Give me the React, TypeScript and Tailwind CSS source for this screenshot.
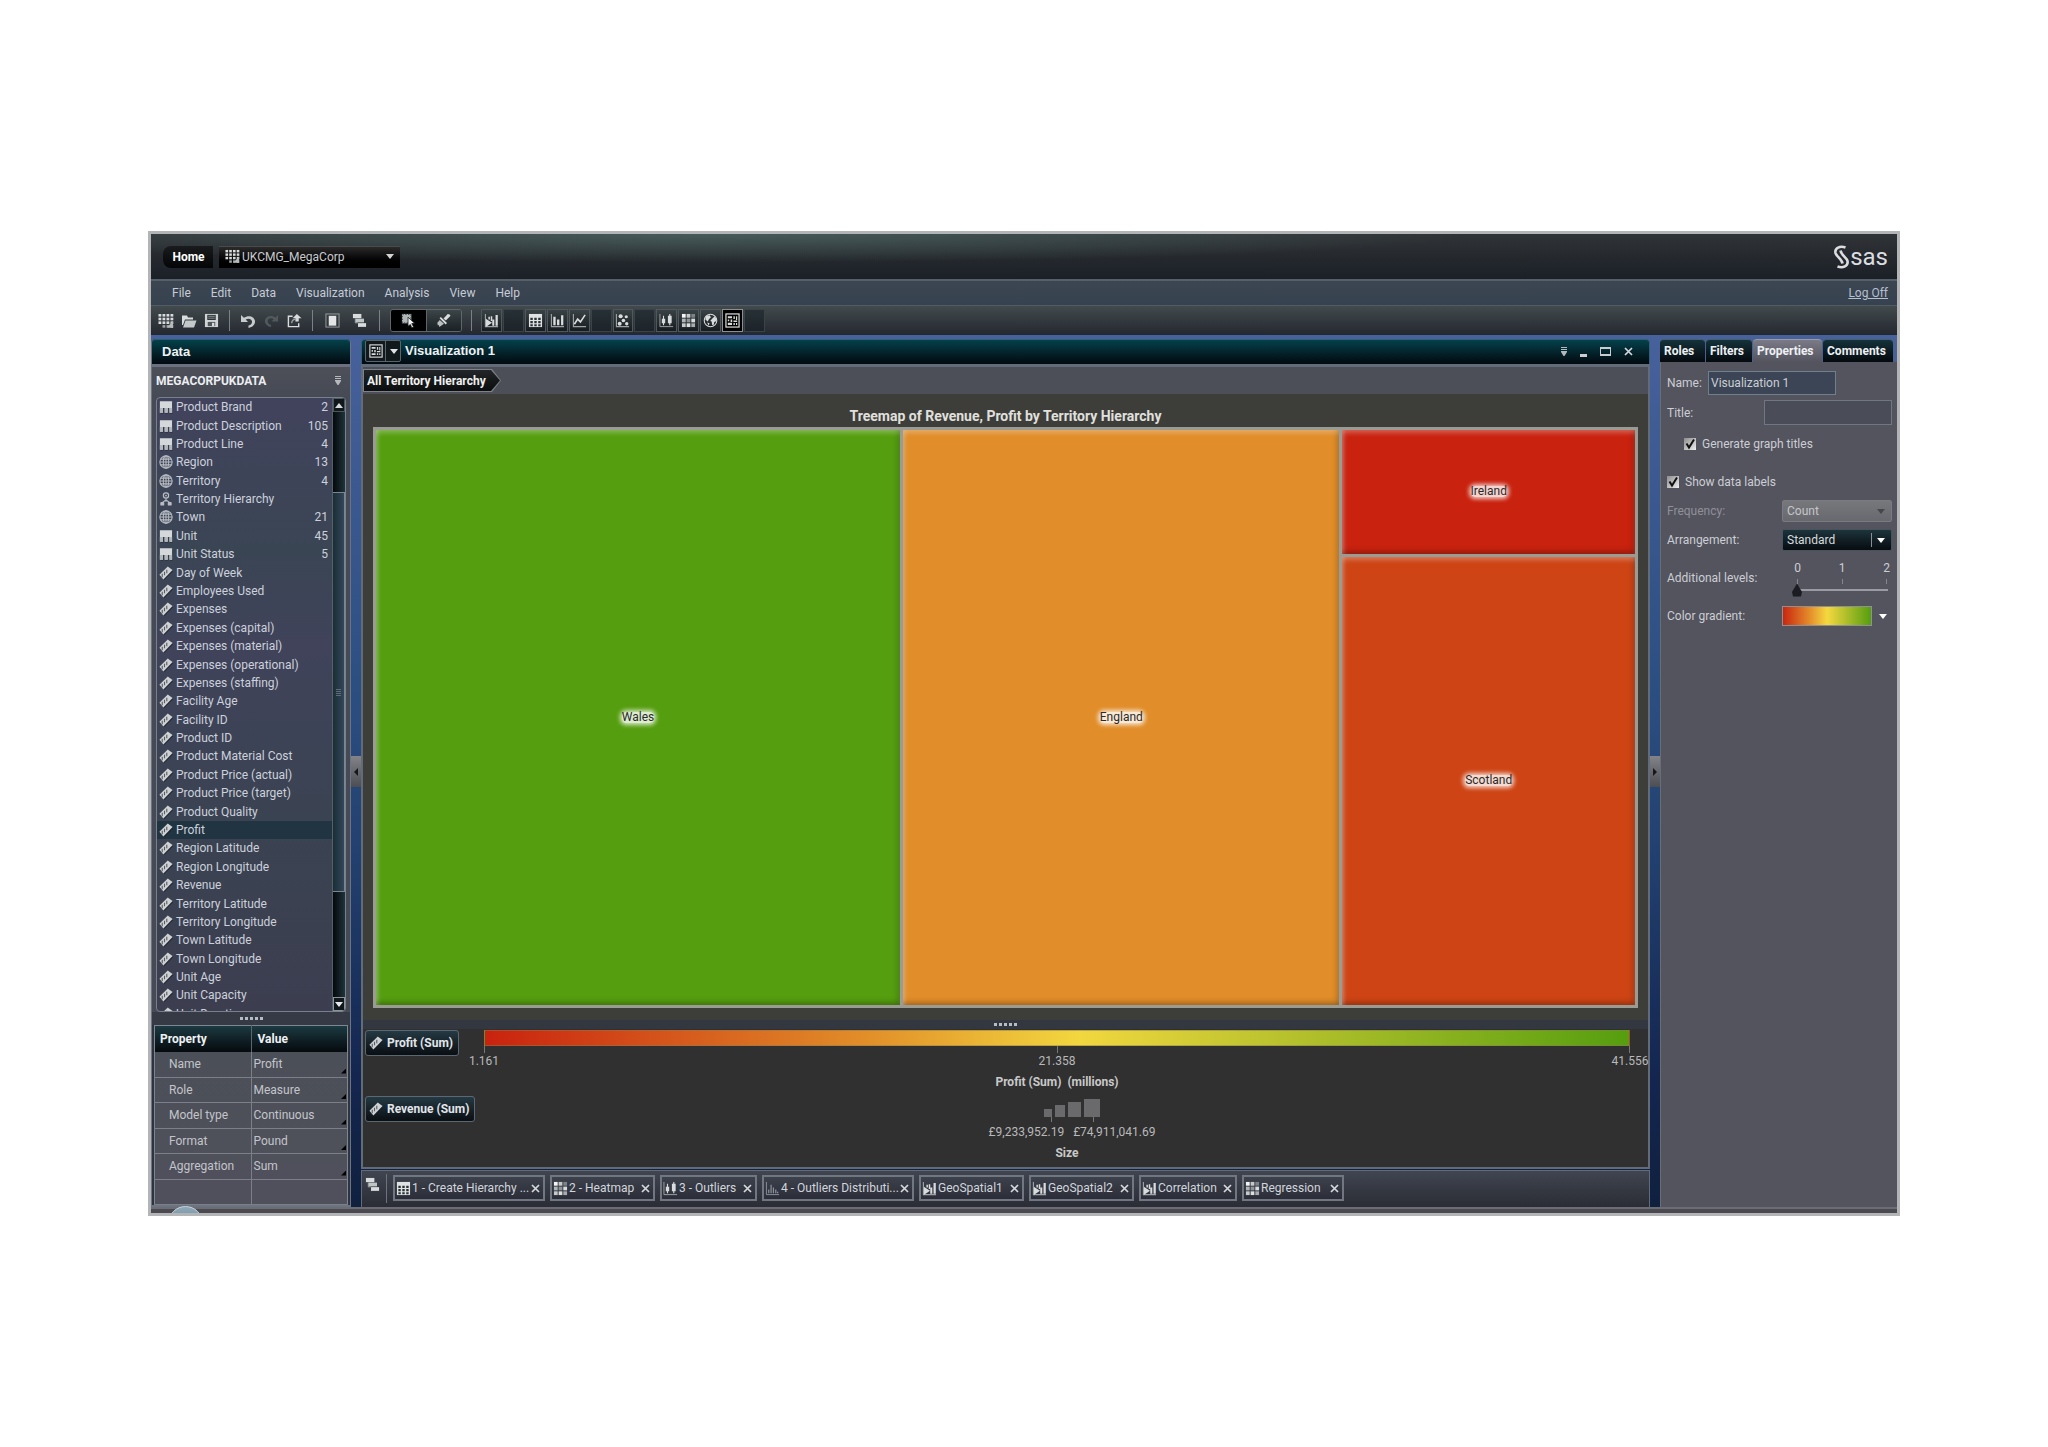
import type { ReactNode } from 'react';

const items: [string, string, string][] = [
  ['cat', 'Product Brand', '2'],
  ['cat', 'Product Description', '105'],
  ['cat', 'Product Line', '4'],
  ['geo', 'Region', '13'],
  ['geo', 'Territory', '4'],
  ['tree', 'Territory Hierarchy', ''],
  ['geo', 'Town', '21'],
  ['cat', 'Unit', '45'],
  ['cat', 'Unit Status', '5'],
  ['rule', 'Day of Week', ''],
  ['rule', 'Employees Used', ''],
  ['rule', 'Expenses', ''],
  ['rule', 'Expenses (capital)', ''],
  ['rule', 'Expenses (material)', ''],
  ['rule', 'Expenses (operational)', ''],
  ['rule', 'Expenses (staffing)', ''],
  ['rule', 'Facility Age', ''],
  ['rule', 'Facility ID', ''],
  ['rule', 'Product ID', ''],
  ['rule', 'Product Material Cost', ''],
  ['rule', 'Product Price (actual)', ''],
  ['rule', 'Product Price (target)', ''],
  ['rule', 'Product Quality', ''],
  ['rule', 'Profit', ''],
  ['rule', 'Region Latitude', ''],
  ['rule', 'Region Longitude', ''],
  ['rule', 'Revenue', ''],
  ['rule', 'Territory Latitude', ''],
  ['rule', 'Territory Longitude', ''],
  ['rule', 'Town Latitude', ''],
  ['rule', 'Town Longitude', ''],
  ['rule', 'Unit Age', ''],
  ['rule', 'Unit Capacity', ''],
  ['rule', 'Unit Duration', ''],
];

const properties = [
  ['Name', 'Profit'],
  ['Role', 'Measure'],
  ['Model type', 'Continuous'],
  ['Format', 'Pound'],
  ['Aggregation', 'Sum'],
  ['', ''],
];

function Svg({ children, className = 'size-4' }: { children: ReactNode; className?: string }) {
  return (
    <svg viewBox="0 0 16 16" className={`${className} shrink-0`} fill="none" aria-hidden="true">
      {children}
    </svg>
  );
}

const light = '#d9dcdc';
const mid = '#9ea4a6';

function Icon({ name, className }: { name: string; className?: string }) {
  switch (name) {
    case 'cat':
      return (
        <Svg className={className}>
          <path d="M1.5 3h14v12.5h-3v-6h-2v6H7v-6H5v6H2z" fill="#15181f" opacity=".6" />
          <path d="M1 1.500h14v13h-3V9h-2v5.500H6.500V9h-2v5.500H1z" fill="#d4d8da" />
          <path d="M1 9h3.500v5.500H1zM6.500 9h3.500v5.500H6.500zM12 9h3v5.500h-3z" fill="#b2b7bb" />
        </Svg>
      );
    case 'geo':
      return (
        <Svg className={className}>
          <circle cx="8" cy="8" r="7" stroke="#b6bac0" strokeWidth="1.3" />
          <ellipse cx="8" cy="8" rx="3.1" ry="7" stroke="#b6bac0" strokeWidth="1.200" />
          <path d="M1 8h14M8 1v14M2 4.7h12M2 11.3h12" stroke="#b6bac0" strokeWidth="1.200" />
        </Svg>
      );
    case 'tree':
      return (
        <Svg className={className}>
          <circle cx="8" cy="4" r="3" stroke="#b9bdc2" strokeWidth="1.4" />
          <circle cx="8" cy="4" r="1" fill="#b9bdc2" />
          <path d="M8 7v4M4 12l4-3 4 3" stroke="#b9bdc2" strokeWidth="1.3" />
          <rect x="1.5" y="11.5" width="4.5" height="4" rx="1" fill="#b9bdc2" />
          <rect x="10" y="11.5" width="4.5" height="4" rx="1" fill="#b9bdc2" />
        </Svg>
      );
    case 'rule':
      return (
        <Svg className={className}>
          <path d="M1.500 11.500 11.500 1.500 16 6 6 16z" fill="#15181f" opacity=".7" />
          <path d="M.5 10 10 .5 15.500 4.500 5 15.300z" fill="#cfd2d3" />
          <path d="M3.700 8.800v4M6.300 6.500v4M8.900 4.200v4" stroke="#575c66" strokeWidth="1.300" />
        </Svg>
      );
    case 'dots':
      return (
        <Svg className={className}>
          {[0, 1, 2, 3].map((r) =>
            [0, 1, 2, 3].map((c) =>
              r === 3 && c < 1 ? null : (
                <rect key={`${r}${c}`} x={0.5 + c * 4} y={1 + r * 3.7} width="2.8" height="2.6" fill={r === 3 ? mid : light} />
              ),
            ),
          )}
          <path d="M9 14.5 15 8v7z" fill="#b6baba" />
        </Svg>
      );
    case 'open':
      return (
        <Svg className={className}>
          <path d="M1 2.5h5l1 2h5v2H4L2 12H1z" fill={light} />
          <path d="M4.5 7.5H15.5L13 14.5H2z" fill="#c3c8c9" />
        </Svg>
      );
    case 'save':
      return (
        <Svg className={className}>
          <path d="M1 1h14v14H1z" fill="#cfd3d3" />
          <path d="M3.5 2h9v5.5h-9z" fill="#2d3337" />
          <path d="M4.5 3.5h7M4.5 5.5h7" stroke="#8d9395" />
          <path d="M4 9.5h8V14H4z" fill="#50575b" />
          <path d="M8.5 10.5h2.5V14H8.5z" fill={light} />
        </Svg>
      );
    case 'undo':
      return (
        <Svg className={className}>
          <path d="M1 2v7h7L5.700 6.600C8 5 11.500 5.500 12 8.300c.3 2-1 3.700-3.500 4.300v2.400c4-.5 6.800-3.400 6.500-6.900C14.500 3.500 8.500 1.500 3.900 4.800z" fill="#c6cccd" />
        </Svg>
      );
    case 'redo':
      return (
        <Svg className={className}>
          <path d="M15 2v7H8l2.300-2.400C8 5 4.500 5.500 4 8.300c-.3 2 1 3.700 3.500 4.300v2.400C3.500 14.500.7 11.600 1 8.100 1.500 3.500 7.500 1.500 12.100 4.800z" fill="#51595d" />
        </Svg>
      );
    case 'export':
      return (
        <Svg className={className}>
          <path d="M6 3.500H1.500V14.500H12.500V11" stroke={light} strokeWidth="1.500" />
          <path d="M10.500 1 15.500 5.500H12.500V9H9V5.500H6z" fill={light} />
          <path d="M5 11c0-3 1.500-4.500 5-4.500" stroke={mid} strokeWidth="1.400" />
        </Svg>
      );
    case 'page':
      return (
        <Svg className={className}>
          <rect x="1" y="1" width="14" height="14" stroke="#8a9092" strokeWidth="1.200" />
          <rect x="4" y="3" width="8" height="10.500" fill="#e4e6e6" />
        </Svg>
      );
    case 'cascade':
      return (
        <Svg className={className}>
          <rect x="1" y="1" width="9" height="4.500" fill={light} />
          <path d="M3.500 6v4.500H6M7 11v4" stroke={mid} strokeWidth="1" />
          <rect x="3.800" y="6" width="9" height="4" fill="#bfc4c5" />
          <rect x="6.500" y="10.800" width="8.500" height="4" fill={light} />
        </Svg>
      );
    case 'select':
      return (
        <Svg className={className}>
          <rect x="1" y="1" width="10" height="10" fill="#b0b5b6" />
          <path d="M1.500 1.500h9v9h-9z" stroke="#3a4044" strokeDasharray="1.500 1.500" />
          <path d="M7.500 4.500 14.500 11l-3 .3L13.500 15l-2 .8-1.500-3.500L7.500 14z" fill="#f0f1f1" stroke="#15181b" strokeWidth=".8" />
        </Svg>
      );
    case 'brush':
      return (
        <Svg className={className}>
          <path d="M14.500 1.500 15.500 3 10.500 8 8 5.800 12.500 1z" fill={light} />
          <path d="M4.500 5 11 11.500" stroke={light} strokeWidth="2" />
          <path d="M4 7.500 1 11l1 .5-.5 1.500 1.500-.3L3.500 15 8.500 11.500z" fill="#b9bebf" />
        </Svg>
      );
    case 'auto':
      return (
        <Svg className={className}>
          <path d="M1.500 1v13.500H15" stroke={mid} strokeWidth="1.200" />
          <path d="M2 6l6.500 4.500L2 15z" fill={light} />
          <path d="M5.500 4v3M8 3.500v5" stroke={light} strokeWidth="1.600" />
          <path d="M8.800 7H11v6.500H8.800zM12.300 2h2.400v11.500h-2.400z" fill={light} />
        </Svg>
      );
    case 'table':
      return (
        <Svg className={className}>
          <path d="M1 1h14v14H1z" fill="#dfe2e2" />
          <path d="M2.500 5h2.600v2.500H2.500zM6.700 5h2.600v2.500H6.700zM10.900 5h2.600v2.500h-2.600zM2.500 8.500h2.600V11H2.500zM6.700 8.500h2.600V11H6.700zM10.900 8.500h2.600V11h-2.600zM2.500 12h2.600v2H2.500zM6.700 12h2.600v2H6.700zM10.900 12h2.600v2h-2.600z" fill="#2b3236" />
        </Svg>
      );
    case 'bars':
      return (
        <Svg className={className}>
          <path d="M1.500 1v13.500H15" stroke={mid} strokeWidth="1.200" />
          <path d="M3.500 4H6v9H3.500zM7.500 7H10v6H7.500zM11.800 2.500h2.400V13h-2.400z" fill={light} />
        </Svg>
      );
    case 'line':
      return (
        <Svg className={className}>
          <path d="M1.500 1v13.500H15" stroke={mid} strokeWidth="1.200" />
          <path d="M2.500 12 6 6.500 9 9.500 14 2" stroke={light} strokeWidth="1.700" />
        </Svg>
      );
    case 'scatter':
      return (
        <Svg className={className}>
          <path d="M1.500 1v13.500H15" stroke={mid} strokeWidth="1.200" />
          <circle cx="6" cy="3.500" r="2.200" fill={light} />
          <circle cx="12" cy="4" r="1.700" fill={light} />
          <circle cx="9" cy="8" r="1.900" fill={light} />
          <circle cx="5" cy="11.500" r="2.100" fill={light} />
          <circle cx="12.500" cy="11.500" r="1.800" fill={light} />
        </Svg>
      );
    case 'box':
      return (
        <Svg className={className}>
          <path d="M1 1v13.500M1 14.500H15" stroke={mid} />
          <path d="M4.800 3v10M11.500 1v12" stroke={light} strokeWidth="1.200" />
          <path d="M3 6h3.600v5H3zM9.500 3h4v8h-4z" fill={light} />
        </Svg>
      );
    case 'heat':
      return (
        <Svg className={className}>
          {[0, 1, 2].map((r) =>
            [0, 1, 2].map((c) => (
              <rect
                key={`${r}${c}`}
                x={1 + c * 5}
                y={1 + r * 5}
                width="4"
                height="4"
                fill={['#f4f5f5', '#c5c9ca', '#7c8285', '#b0b5b7', '#8d9396', '#d8dbdb', '#c5c9ca', '#dddfdf', '#a6abae'][r * 3 + c]}
              />
            )),
          )}
        </Svg>
      );
    case 'globe':
      return (
        <Svg className={className}>
          <circle cx="8" cy="8" r="6.700" stroke={light} strokeWidth="1.100" />
          <path d="M3 3.500 7 2.500 8.500 4.500 6.500 6.500 5 9 2.500 7zM9.500 6.500l3-3 2 3.500-1 2-1.500.5-.5 3-1.800.3-.4-3.500-1.500-1zM4.500 10l2.500 1-1 2.500z" fill={light} />
        </Svg>
      );
    case 'treemap':
      return (
        <Svg className={className}>
          <rect x="1" y="1" width="14" height="14" stroke={light} strokeWidth="1.300" />
          <path d="M3 3.500h4.500v2H3zM9 3.500h1.500v3H9zM11.700 3.500H13v4h-1.300zM3 6.800h1.500v2H3zM6 6.800h1.700v2.700H6zM9 8h4v1.500H9zM3 10.500h4.500v2.200H3zM9 10.700h1.500v2H9zM11.700 10.700H13v2h-1.300z" fill={light} />
        </Svg>
      );
    case 'hist':
      return (
        <Svg className={className}>
          <path d="M1.500 1v13.500H15" stroke="#8c939b" />
          <path d="M4 9v4M6.500 4v9M9 7v6M11.500 9v4M13.500 11.500V13" stroke="#8c939b" strokeWidth="1.300" />
        </Svg>
      );
    default:
      return null;
  }
}

function Tri({ className = '' }: { className?: string }) {
  return (
    <svg viewBox="0 0 8 5" className={`h-[5px] w-2 shrink-0 ${className}`} aria-hidden="true">
      <path d="M0 0h8L4 5z" fill="currentColor" />
    </svg>
  );
}

function MenuMark() {
  return (
    <svg viewBox="0 0 6 9" className="h-[9px] w-1.5" aria-hidden="true">
      <path d="M0 .5h6M0 2.500h6" stroke="#b4b9bd" />
      <path d="M0 4h6v1L3.500 9h-1L0 5z" fill="#b4b9bd" />
    </svg>
  );
}

function Sep({ className = '' }: { className?: string }) {
  return <span className={`h-[21px] w-px shrink-0 bg-[#7a8288] ${className}`} />;
}

function Dots() {
  return (
    <span className="flex gap-[2px]">
      {[0, 1, 2, 3, 4].map((i) => (
        <span key={i} className="size-[3px] bg-[#b4bcc8]" />
      ))}
    </span>
  );
}

function Header() {
  return (
    <header className="flex h-[45px] items-center bg-[radial-gradient(ellipse_at_32%_0%,rgba(78,104,102,0.75)_0%,transparent_45%),linear-gradient(to_bottom,#303336,#1b2027)] pr-[9px] pl-3">
      <button
        type="button"
        className="flex h-[22px] w-[50px] items-center justify-center rounded-l-lg bg-linear-to-b from-[#191b1d] to-[#050607] pl-px text-xs font-bold text-white"
      >
        Home
      </button>
      <div className="relative ml-1.5 flex items-center">
        <span className="pointer-events-none absolute left-[6px]">
          <Icon name="dots" className="size-[15px]" />
        </span>
        <select
          aria-label="Exploration"
          className="h-[22px] w-[181px] appearance-none border-t border-[#4a4a4a] bg-linear-to-b from-[#2b2b2b] to-black pl-[23px] text-xs text-[#c9cbd0]"
        >
          <option>UKCMG_MegaCorp</option>
        </select>
        <Tri className="pointer-events-none absolute right-[6px] text-[#d4d4d4]" />
      </div>
      <div className="ml-auto flex items-center text-[#dcdde0]" aria-label="SAS">
        <svg viewBox="1 0 16 24" className="h-6 w-4" fill="none" aria-hidden="true">
          <path d="M12.500 2.500C7 .5 1.500 3 2.500 8c.8 3.500 6.500 6 7 10.500" stroke="currentColor" strokeWidth="2.600" />
          <path d="M4.500 21.500c5.500 2 11-.5 10-5.500-.8-3.500-6.500-6-7-10.500" stroke="currentColor" strokeWidth="2.600" />
        </svg>
        <span className="text-2xl leading-6">sas</span>
      </div>
    </header>
  );
}

function MenuBar() {
  return (
    <nav className="flex h-[26px] items-center gap-5 border-t-2 border-[#566068] bg-linear-to-b from-[#3c4652] to-[#374250] pr-[9px] pl-[21px] text-xs text-[#c6ccd6]">
      {['File', 'Edit', 'Data', 'Visualization', 'Analysis', 'View', 'Help'].map((m) => (
        <button key={m} type="button">
          {m}
        </button>
      ))}
      <a href="#logoff" className="ml-auto text-[#b4bfd0] underline">
        Log Off
      </a>
    </nav>
  );
}

const chartTypes = [
  ['auto', 'Automatic chart'],
  ['', ''],
  ['table', 'Table'],
  ['bars', 'Bar chart'],
  ['line', 'Line chart'],
  ['', ''],
  ['scatter', 'Scatter plot'],
  ['', ''],
  ['box', 'Box plot'],
  ['heat', 'Heat map'],
  ['globe', 'Geo map'],
  ['treemap', 'Treemap'],
  ['', ''],
];

function ToolBar() {
  return (
    <div className="flex h-[30px] items-center border-t border-[#525b63] bg-linear-to-b from-[#434a4d] to-[#23292f] pl-[7px]">
      <div className="flex items-center gap-[7px]">
        <button type="button" aria-label="New"><Icon name="dots" className="size-4" /></button>
        <button type="button" aria-label="Open"><Icon name="open" className="size-4" /></button>
        <button type="button" aria-label="Save"><Icon name="save" className="size-[15px]" /></button>
      </div>
      <Sep className="mx-[10px]" />
      <div className="flex items-center gap-2">
        <button type="button" aria-label="Undo"><Icon name="undo" /></button>
        <button type="button" aria-label="Redo" disabled><Icon name="redo" className="size-[15px]" /></button>
        <button type="button" aria-label="Export"><Icon name="export" className="size-[15px]" /></button>
      </div>
      <Sep className="mr-3 ml-[10px]" />
      <div className="flex items-center gap-3">
        <button type="button" aria-label="Full view"><Icon name="page" className="size-[15px]" /></button>
        <button type="button" aria-label="Arrange windows"><Icon name="cascade" className="size-[15px]" /></button>
      </div>
      <Sep className="mr-[10px] ml-3" />
      <div className="flex h-[23px] w-[72px] overflow-hidden rounded-[3px] border border-[#5d666b]">
        <button type="button" aria-label="Select" aria-pressed="true" className="flex flex-1 items-center justify-center border-r border-[#5d666b] bg-black">
          <Icon name="select" className="size-[15px]" />
        </button>
        <button type="button" aria-label="Brush" className="flex flex-1 items-center justify-center bg-linear-to-b from-[#3c4548] to-[#1b2124]">
          <Icon name="brush" className="size-[15px]" />
        </button>
      </div>
      <Sep className="mx-[9px]" />
      <div className="grid w-[284px] grid-cols-[repeat(13,minmax(0,1fr))] gap-px">
        {chartTypes.map(([name, label], i) =>
          name ? (
            <button
              key={i}
              type="button"
              aria-label={label}
              className={
                name === 'treemap'
                  ? 'flex h-[23px] items-center justify-center border border-[#8b9093] bg-black'
                  : 'flex h-[23px] items-center justify-center border border-[#4f585c] bg-linear-to-b from-[#394245] to-[#171c1f]'
              }
            >
              <Icon name={name} className="size-[15px]" />
            </button>
          ) : (
            <span key={i} className="h-[23px] border border-[#3a4347] bg-linear-to-b from-[#273035] to-[#1c2429]" />
          ),
        )}
      </div>
    </div>
  );
}

function DataPanel() {
  return (
    <aside className="flex w-[200px] shrink-0 flex-col rounded-t-sm border-x border-[#6a7482] bg-[#2e333d]">
      <h2 className="flex h-[25px] items-center rounded-t-sm border-t border-[#2e5f70] bg-linear-to-b from-[#03424a] to-[#020a10] pl-2.5 text-[13px] font-bold text-[#eef2f4] font-['Liberation_Sans',sans-serif]">
        Data
      </h2>
      <div className="flex h-[33px] items-center justify-between border-t-[3px] border-[#6b7080] bg-linear-to-b from-[#4d5059] to-[#464a54] pr-[9px] pb-[3px] pl-1">
        <h3 className="text-xs font-bold text-[#eceef2]">MEGACORPUKDATA</h3>
        <button type="button" aria-label="Data menu">
          <MenuMark />
        </button>
      </div>
      <div className="bg-[#464a54] px-1">
        <div className="flex h-[615px] overflow-hidden rounded-sm border border-[#77808c] bg-[linear-gradient(to_bottom,#41435c,#3a4554_25%,#40435a_40%,#3a4352_70%,#3c3e50)]">
          <ul className="grid h-[625px] min-w-0 flex-1 auto-rows-fr text-xs leading-4 text-[#ccd1dc]">
            {items.map(([icon, name, count]) => (
              <li key={name} className={name === 'Profit' ? 'flex items-center bg-[#213442] pr-1 pl-[2px]' : 'flex items-center pr-1 pl-[2px]'}>
                <Icon name={icon} className="size-[14px]" />
                <span className="ml-[3px] whitespace-nowrap">{name}</span>
                <span className="ml-auto">{count}</span>
              </li>
            ))}
          </ul>
          <div className="flex w-[13px] flex-col border-l border-[#56606a] bg-linear-to-r from-[#05090c] to-[#20343a]">
            <button type="button" aria-label="Scroll up" className="flex h-[14px] items-center justify-center border border-[#4c575e] bg-[#11181c] text-[#d6dadc]">
              <Tri className="rotate-180" />
            </button>
            <div className="h-[80px]" />
            <div className="flex h-[400px] items-center justify-center border-y border-r border-[#7b8790] bg-linear-to-r from-[#1a2e36] to-[#34465a]">
              <span className="flex flex-col gap-px">
                {[0, 1, 2, 3].map((i) => (
                  <span key={i} className="h-px w-[5px] bg-[#5d6c78]" />
                ))}
              </span>
            </div>
            <button type="button" aria-label="Scroll down" className="mt-auto flex h-[14px] items-center justify-center border border-[#8a949a] bg-[#11181c] text-[#e6eaec]">
              <Tri />
            </button>
          </div>
        </div>
      </div>
      <div className="flex h-[13px] items-center justify-center bg-[#353a44]">
        <Dots />
      </div>
      <table className="mx-[2px] h-[180px] table-fixed border-collapse border border-[#7d8791] bg-linear-to-b from-[#4a4f56] to-[#50505c] text-left text-xs leading-4">
        <thead>
          <tr className="h-[26px] bg-linear-to-b from-[#1c3a42] to-[#060b0f] text-[#eef1f4]">
            <th className="w-1/2 border-r border-[#5c666f] pl-[5px]">Property</th>
            <th className="pl-[6px]">Value</th>
          </tr>
        </thead>
        <tbody className="text-[#c3c5cb]">
          {properties.map(([k, v], i) => (
            <tr key={i} className="h-[25px] border-b border-[#7c7e88]">
              <td className="border-r border-[#7c7e88] pl-[14px]">{k}</td>
              <td className="relative pl-[2px]">
                {v}
                {v && <span className="absolute right-px bottom-[3px] size-[5px] bg-black [clip-path:polygon(100%_0,100%_100%,0_100%)]" />}
              </td>
            </tr>
          ))}
        </tbody>
      </table>
      <div className="mt-auto h-[2px] bg-[#6a7482]" />
    </aside>
  );
}

function Tile({ label, className }: { label: string; className: string }) {
  return (
    <div className={`flex items-center justify-center shadow-[inset_0_4px_5px_-1px_rgba(255,255,255,0.28),inset_0_-4px_6px_-2px_rgba(0,0,0,0.3),inset_-4px_0_6px_-3px_rgba(0,0,0,0.25),inset_4px_0_4px_-2px_rgba(255,255,255,0.3)] ${className}`}>
      <span className="rounded-sm bg-white/80 text-xs leading-[11px] text-[#2a2a2a] shadow-[0_0_4px_2px_rgba(255,255,255,0.75)]">{label}</span>
    </div>
  );
}

function RoleButton({ children }: { children: string }) {
  return (
    <button
      type="button"
      className="flex h-[26px] items-center rounded-[3px] border border-[#5b6872] bg-linear-to-b from-[#253a44] to-[#0a0f13] pr-[5px] pl-[3px] text-xs font-bold whitespace-nowrap text-[#e2e5ea]"
    >
      <Icon name="rule" className="mr-[4px] size-[14px]" />
      {children}
    </button>
  );
}

const openTabs = [
  ['table', '1 - Create Hierarchy ...', 'w-[152px]'],
  ['heat', '2 - Heatmap', 'w-[105px]'],
  ['box', '3 - Outliers', 'w-[97px]'],
  ['hist', '4 - Outliers Distributi...', 'w-[152px]'],
  ['auto', 'GeoSpatial1', 'w-[105px]'],
  ['auto', 'GeoSpatial2', 'w-[105px]'],
  ['auto', 'Correlation', 'w-[98px]'],
  ['heat', 'Regression', 'w-[102px]'],
];

function CloseMark({ className = 'size-[9px]' }: { className?: string }) {
  return (
    <svg viewBox="0 0 9 9" className={className} fill="none" aria-hidden="true">
      <path d="M1 1l7 7M8 1 1 8" stroke="#d5d8dc" strokeWidth="1.700" />
    </svg>
  );
}

function Visualization() {
  return (
    <main className="flex min-w-0 flex-1 flex-col">
      <div className="flex h-[25px] items-center rounded-t-sm border border-b-0 border-[#35606f] bg-linear-to-b from-[#03424c] to-[#020a10] pr-4 pb-[2px] pl-[3px]">
        <button type="button" aria-label="Visualization type" className="flex h-[22px] w-[36px] items-center rounded-[2px] border border-[#5a656b] bg-[#12191d]">
          <span className="flex h-full w-[20px] items-center justify-center border-r border-[#5a656b]">
            <Icon name="treemap" className="size-[14px]" />
          </span>
          <Tri className="ml-1 text-[#dfe3e5]" />
        </button>
        <h2 className="ml-[4px] text-[13px] font-bold text-[#eef2f4] font-['Liberation_Sans',sans-serif]">Visualization 1</h2>
        <div className="ml-auto flex items-center gap-[13px]">
          <button type="button" aria-label="Window menu"><MenuMark /></button>
          <button type="button" aria-label="Minimize" className="mt-2 h-[3px] w-[7px] bg-[#c9cdd0]" />
          <button type="button" aria-label="Maximize" className="h-[9px] w-[11px] border-2 border-x border-[#c9cdd0]" />
          <button type="button" aria-label="Close"><CloseMark /></button>
        </div>
      </div>
      <div className="flex flex-1 flex-col border-2 border-t-[3px] border-[#626c79] bg-[#3d3d3a]">
        <div className="flex h-[27px] items-center bg-[#4c4e58]">
          <div className="bg-[#7d8288] [clip-path:polygon(0_0,calc(100%-9px)_0,100%_50%,calc(100%-9px)_100%,0_100%)]">
            <button
              type="button"
              className="m-px flex h-[21px] w-[136px] items-center bg-linear-to-b from-[#222628] to-[#0b0d0e] pl-[3px] text-xs font-bold whitespace-nowrap text-[#f0f0f0] [clip-path:polygon(0_0,calc(100%-9px)_0,100%_50%,calc(100%-9px)_100%,0_100%)]"
            >
              All Territory Hierarchy
            </button>
          </div>
        </div>
        <div className="flex flex-1 flex-col px-[10px] pb-[12px]">
          <h3 className="flex h-[33px] items-end justify-center pb-[3px] text-sm leading-4 font-bold text-[#e0e0de]">
            Treemap of Revenue, Profit by Territory Hierarchy
          </h3>
          <div className="flex flex-1 gap-[3px] border-[3px] border-[#9a9b93] bg-[#9a9b93]">
            <Tile label="Wales" className="flex-[525_1_0%] bg-[#559e0f]" />
            <Tile label="England" className="flex-[437_1_0%] bg-[#e18d29]" />
            <div className="flex flex-[293_1_0%] flex-col gap-[3px]">
              <Tile label="Ireland" className="flex-[124_1_0%] bg-[#c9220f]" />
              <Tile label="Scotland" className="flex-[450_1_0%] bg-[#ce4415]" />
            </div>
          </div>
        </div>
        <div className="flex h-[9px] items-center justify-center bg-[#33373f]">
          <Dots />
        </div>
        <div className="flex h-[138px] bg-[#303031] pl-0.5">
          <div className="flex w-[119px] shrink-0 flex-col items-start gap-10 pt-px">
            <RoleButton>Profit (Sum)</RoleButton>
            <RoleButton>Revenue (Sum)</RoleButton>
          </div>
          <div className="mr-[18px] flex min-w-0 flex-1 flex-col text-xs leading-4 text-[#b9b9b9]">
            <div className="mt-px h-[16px] shrink-0 border border-[#8a7a50]/50 bg-[linear-gradient(to_right,#c9220f,#e18d29_33%,#f2d73f_52%,#559e0f)]" />
            <div className="flex h-[7px] shrink-0 justify-between">
              <span className="w-px bg-[#77777a]" />
              <span className="w-px bg-[#77777a]" />
              <span className="w-px bg-[#77777a]" />
            </div>
            <div className="-mx-5 flex h-[17px] shrink-0 justify-between">
              <span className="w-10 text-center">1.161</span>
              <span className="w-10 text-center">21.358</span>
              <span className="w-10 text-center">41.556</span>
            </div>
            <div className="mt-[3px] text-center text-xs leading-[18px] font-bold whitespace-pre text-[#c9c9c9]">Profit (Sum)  (millions)</div>
            <div className="ml-[30px] flex flex-col items-center">
              <div className="mt-2 flex h-[18px] items-end gap-[3px] text-[#6a6a6c]">
                <span className="size-2 bg-current" />
                <span className="h-3 w-[10px] bg-current" />
                <span className="h-[15px] w-[13px] bg-current" />
                <span className="h-[18px] w-4 bg-current" />
              </div>
              <div className="flex h-[5px] w-[43px] justify-between">
                <span className="w-px bg-[#77777a]" />
                <span className="w-px bg-[#77777a]" />
              </div>
              <div className="mt-[2px] flex gap-[9px]">
                <span>£9,233,952.19</span>
                <span>£74,911,041.69</span>
              </div>
              <div className="mt-[5px] mr-2.5 text-xs leading-4 font-bold text-[#c9c9c9]">Size</div>
            </div>
          </div>
        </div>
      </div>
      <div className="mt-px flex h-[37px] items-center border border-b-0 border-[#626c79] bg-linear-to-b from-[#41454f] to-[#2a2d36] pb-[2px] pl-[3px]">
        <button type="button" aria-label="Arrange windows" className="mb-2">
          <Icon name="cascade" className="size-[15px]" />
        </button>
        <span className="mx-[6px] h-[29px] w-px bg-[#6c737d]" />
        <div className="flex gap-[5px]">
          {openTabs.map(([icon, label, width]) => (
            <div key={label} className={`flex h-[26px] items-center border-2 border-[#717780] bg-linear-to-b from-[#3d414c] to-[#2b2e38] pr-[3px] pl-px ${width}`}>
              <button type="button" className="flex items-center text-xs whitespace-nowrap text-[#d2d5dc]">
                <Icon name={icon} className="mr-px size-[15px]" />
                {label}
              </button>
              <button type="button" aria-label={`Close ${label}`} className="ml-auto">
                <CloseMark />
              </button>
            </div>
          ))}
        </div>
      </div>
    </main>
  );
}

function Handle({ flip = false }: { flip?: boolean }) {
  return (
    <div className="flex w-[10px] shrink-0 flex-col">
      <button
        type="button"
        aria-label={flip ? 'Collapse right panel' : 'Collapse left panel'}
        className="mt-[417px] flex h-[31px] items-center justify-center bg-linear-to-b from-[#82848a] to-[#4c4e53]"
      >
        <svg viewBox="0 0 4 8" className={flip ? 'h-2 w-1 rotate-180' : 'h-2 w-1'} aria-hidden="true">
          <path d="M4 0v8L0 4z" fill="#15171a" />
        </svg>
      </button>
    </div>
  );
}

const sideTabs = [
  ['Roles', 'w-[45px]'],
  ['Filters', 'w-[46px]'],
  ['Properties', 'w-[69px]'],
  ['Comments', 'w-[70px]'],
];

function Check({ label }: { label: string }) {
  return (
    <label className="flex items-center gap-[6px]">
      <span className="relative size-3">
        <input
          type="checkbox"
          defaultChecked
          className="block size-3 appearance-none bg-linear-to-br from-[#8d8d8d] to-[#efefef]"
        />
        <svg viewBox="0 0 12 12" className="pointer-events-none absolute inset-0 size-3" fill="none" aria-hidden="true">
          <path d="M2.500 5.500 5 9.500 10 1.500" stroke="#111" strokeWidth="2" />
        </svg>
      </span>
      {label}
    </label>
  );
}

function PropertiesPanel() {
  return (
    <aside className="flex w-[237px] shrink-0 flex-col text-xs text-[#ccced4]">
      <div role="tablist" className="flex h-[23px] gap-px bg-[#4a5f92] pr-[4px]">
        {sideTabs.map(([t, w]) => (
          <button
            key={t}
            type="button"
            role="tab"
            aria-selected={t === 'Properties'}
            className={
              t === 'Properties'
                ? `${w} rounded-t-sm border-t border-[#9a9ba6] bg-linear-to-b from-[#7b7b88] to-[#53545e] pb-px pl-1 text-left font-bold text-[#eef0f3]`
                : `${w} rounded-t-sm border-t border-[#43606c] bg-linear-to-b from-[#15323b] to-[#050a0e] pb-px pl-1 text-left font-bold text-[#eef0f3]`
            }
          >
            {t}
          </button>
        ))}
      </div>
      <div className="flex flex-1 flex-col border-l border-[#6a6c76] bg-[#53545e] pr-[5px] pl-[6px]">
        <div className="mt-[9px] flex items-center">
          <label htmlFor="viz-name" className="w-[41px]">Name:</label>
          <input id="viz-name" defaultValue="Visualization 1" className="h-[24px] w-[128px] border border-[#6f7f8b] bg-[#3b4555] pl-[2px]" />
        </div>
        <div className="mt-[5px] flex items-center justify-between">
          <label htmlFor="viz-title">Title:</label>
          <input id="viz-title" className="h-[25px] w-[128px] border border-[#6f7780] bg-[#4a4c57] pl-[2px]" />
        </div>
        <div className="mt-[9px] ml-[17px] flex h-5 items-center">
          <Check label="Generate graph titles" />
        </div>
        <div className="mt-[18px] flex h-5 items-center">
          <Check label="Show data labels" />
        </div>
        <div className="mt-2 flex items-center justify-between text-[#8f9098]">
          <label htmlFor="freq">Frequency:</label>
          <div className="relative flex items-center">
            <select id="freq" disabled className="h-[22px] w-[110px] appearance-none rounded-[2px] border border-[#7a7b80] bg-linear-to-b from-[#77787c] to-[#68696e] pl-1 text-[#c5c6ca] opacity-100">
              <option>Count</option>
            </select>
            <Tri className="pointer-events-none absolute right-[7px] text-[#46474b]" />
          </div>
        </div>
        <div className="mt-[7px] flex items-center justify-between">
          <label htmlFor="arr">Arrangement:</label>
          <div className="relative flex items-center">
            <select id="arr" className="h-[22px] w-[110px] appearance-none rounded-[2px] border border-[#47545c] bg-linear-to-b from-[#1d343c] to-[#070c10] pl-1 text-[#d8dade]">
              <option>Standard</option>
            </select>
            <span className="pointer-events-none absolute right-[20px] h-[14px] w-px bg-[#8a9196]" />
            <Tri className="pointer-events-none absolute right-[7px] text-white" />
          </div>
        </div>
        <div className="mt-[5px] flex h-11 items-center justify-between">
          <label htmlFor="levels">Additional levels:</label>
          <div className="flex w-[100px] flex-col">
            <div className="flex justify-between leading-4">
              {['0', '1', '2'].map((n) => (
                <span key={n} className="w-[11px] text-center">{n}</span>
              ))}
            </div>
            <div className="mt-[3px] flex h-[5px] justify-between px-[5px]">
              <span className="w-px bg-[#85868e]" />
              <span className="w-px bg-[#85868e]" />
              <span className="w-px bg-[#85868e]" />
            </div>
            <input
              id="levels"
              type="range"
              min="0"
              max="2"
              defaultValue="0"
              className="h-[13px] w-full appearance-none bg-[linear-gradient(#9a9ba2,#9a9ba2)] bg-[length:92px_2px] bg-center bg-no-repeat [&::-webkit-slider-thumb]:h-[13px] [&::-webkit-slider-thumb]:w-[10px] [&::-webkit-slider-thumb]:appearance-none [&::-webkit-slider-thumb]:bg-[#1b1d22] [&::-webkit-slider-thumb]:[clip-path:polygon(50%_0,100%_65%,90%_100%,10%_100%,0_65%)]"
            />
          </div>
        </div>
        <div className="mt-[6px] flex items-center">
          <span className="flex-1">Color gradient:</span>
          <button type="button" aria-label="Color gradient" className="flex w-[110px] items-center">
            <span className="h-[20px] w-[90px] border border-[#8e9096] bg-[linear-gradient(to_right,#c9260f,#e6932c_32%,#f5d840_50%,#559e0f)]" />
            <Tri className="ml-[7px] text-white" />
          </button>
        </div>
      </div>
    </aside>
  );
}

export default function App() {
  return (
    <div className="bg-white px-[148px] pt-[231px] pb-[230px] font-['Roboto','Liberation_Sans',sans-serif]">
      <div className="relative overflow-hidden border-[3px] border-[#b3b4b5]">
        <Header />
        <MenuBar />
        <ToolBar />
        <div className="flex bg-[linear-gradient(to_bottom,#47619c,#2c4f82_40%,#22406f_60%,#142650_85%,#10203f)] pt-[4px]">
          <DataPanel />
          <Handle />
          <Visualization />
          <Handle flip />
          <PropertiesPanel />
        </div>
        <div className="h-[6px] border-t-2 border-[#6b6c74] bg-[#4a4a50]" />
        <div className="absolute bottom-[-28px] left-[17px] size-[35px] rounded-full border border-[#c8d4dc] bg-linear-to-b from-[#8fa9b8] to-[#4d6e85]" />
      </div>
    </div>
  );
}
